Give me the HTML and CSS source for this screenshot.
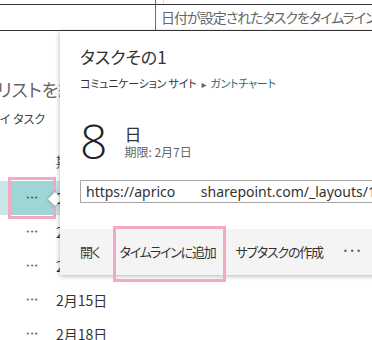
FILE: index.html
```html
<!DOCTYPE html>
<html lang="ja">
<head>
    <meta charset="UTF-8">
    <title>タスクその1</title>
    <link rel="stylesheet" href="styles.css">
</head>
<body>
<div id="page">
    <div class="grid-top">
        <div class="cell-a"></div>
        <div class="cell-b"></div>
        <div class="cell-c"></div>
    </div>
    <div class="grid-row">
        <div class="cell-a"></div>
        <div class="cell-text">日付が設定されたタスクをタイムラインに追加します</div>
    </div>

    <h2 class="list-title">リストを紹介</h2>
    <div class="view-name">マイ タスク</div>

    <ul class="list">
        <li class="list-head"><span class="dots"></span><span class="date">期限</span></li>
        <li class="selected"><span class="dots">•••</span><span class="date">2月7日</span></li>
        <li><span class="dots">•••</span><span class="date">2月9日</span></li>
        <li><span class="dots">•••</span><span class="date">2月12日</span></li>
        <li><span class="dots">•••</span><span class="date">2月15日</span></li>
        <li><span class="dots">•••</span><span class="date">2月18日</span></li>
    </ul>

    <div class="mark" id="markRow"></div>

    <div id="beak"></div>
    <div id="callout">
        <h1 class="c-title">タスクその1</h1>
        <div class="crumb">コミュニケーション サイト<span class="arrow">&#9656;</span><a href="javascript:;">ガントチャート</a></div>
        <div class="due">
            <span class="num">8</span>
            <div class="due-text">
                <div class="unit">日</div>
                <div class="limit">期限: 2月7日</div>
            </div>
        </div>
        <div class="url">https://aprico&nbsp;&nbsp;&nbsp;&nbsp;&nbsp;&nbsp;&nbsp;sharepoint.com/_layouts/15/listform.aspx</div>
        <div class="actions">
            <a href="javascript:;">開く</a>
            <a href="javascript:;">タイムラインに追加</a>
            <a href="javascript:;">サブタスクの作成</a>
            <a href="javascript:;" class="more">•••</a>
        </div>
    </div>

    <div class="mark" id="markBtn"></div>
</div>
</body>
</html>
```

FILE: styles.css
```css
* {
    margin: 0;
    padding: 0;
    list-style: none;
}

body {
    background: #fff;
    font-family: "Noto Sans CJK JP", "Noto Sans", sans-serif;
    font-feature-settings: "palt";
    color: #333;
}

a {
    color: inherit;
    text-decoration: none;
}

#page {
    width: 372px;
    height: 340px;
    overflow: hidden;
    position: relative;
}

/* table header behind the callout */
.grid-top {
    display: flex;
    height: 4px;
    border-bottom: 1px solid #333;
}

.grid-top .cell-b {
    width: 7px;
    border-right: 1px solid #ddd;
}

.grid-row {
    display: flex;
    height: 25px;
    border-bottom: 1px solid #333;
}

.cell-a {
    width: 155px;
    flex: none;
    border-right: 1px solid #3d7b86;
}

.cell-text {
    padding-left: 5px;
    font-size: 14px;
    letter-spacing: -1px;
    line-height: 25px;
    color: #666;
    white-space: nowrap;
}

.list-title {
    margin: 45px 0 0 -3px;
    font-size: 18px;
    line-height: 26px;
    font-weight: normal;
    color: #666;
    white-space: nowrap;
}

.view-name {
    margin: 8px 0 0 -11px;
    font-size: 12px;
    line-height: 18px;
    color: #444;
    white-space: nowrap;
}

.list {
    margin-top: 25px;
}

.list li {
    display: flex;
    align-items: center;
    height: 34px;
}

.list li.list-head {
    height: 16px;
    margin-bottom: 12px;
    font-size: 12px;
    color: #555;
}

.list .dots {
    width: 44px;
    margin-left: 10px;
    align-self: stretch;
    display: flex;
    align-items: center;
    justify-content: center;
    font-family: "DejaVu Sans", sans-serif;
    font-size: 7px;
    color: #666;
}

.list .date {
    margin-left: 2px;
    font-size: 14px;
}

.list li.selected {
    background: #c8e7e7;
}

.list li.selected .dots {
    background: #a0d5d5;
    color: #555;
}

/* callout */
#beak {
    position: absolute;
    left: 50px;
    top: 194px;
    width: 10px;
    height: 10px;
    background: #fff;
    transform: rotate(45deg);
    box-shadow: 0 0 4px rgba(0, 0, 0, .35);
}

#callout {
    position: absolute;
    left: 60px;
    top: 31px;
    width: 340px;
    background: #fff;
    box-shadow: 0 1px 5px rgba(0, 0, 0, .3);
    padding-top: 14px;
}

.c-title {
    margin-left: 20px;
    font-size: 17px;
    line-height: 24px;
    font-weight: normal;
    color: #333;
}

.crumb {
    margin: 6px 0 0 20px;
    font-size: 11px;
    letter-spacing: -0.2px;
    line-height: 16px;
    color: #333;
    white-space: nowrap;
}

.crumb .arrow {
    margin: 0 4px 0 5px;
    font-family: "DejaVu Sans", sans-serif;
    font-size: 10px;
    color: #666;
}

.crumb a {
    color: #1a6e78;
}

.due {
    display: flex;
    margin: 24px 0 0 20px;
}

.due .num {
    font-family: "Open Sans", sans-serif;
    font-weight: 300;
    font-size: 48px;
    line-height: 48px;
    color: #222;
}

.due-text {
    margin: 7px 0 0 17px;
}

.due .unit {
    font-size: 17px;
    line-height: 20px;
    color: #333;
}

.due .limit {
    font-size: 12px;
    line-height: 16px;
    color: #666;
}

.url {
    margin: 15px 0 0 20px;
    height: 21px;
    border: 1px solid #a6a6a6;
    padding-left: 5px;
    font-family: "Noto Sans", sans-serif;
    font-size: 14px;
    line-height: 21px;
    color: #333;
    white-space: nowrap;
    overflow: hidden;
}

.actions {
    display: flex;
    margin-top: 26px;
    height: 46px;
    padding-left: 10px;
    background: #f4f4f4;
    font-size: 13px;
    letter-spacing: -1.2px;
    line-height: 46px;
    white-space: nowrap;
}

.actions a {
    padding: 0 10px;
}

.actions .more {
    font-family: "DejaVu Sans", sans-serif;
    font-size: 8px;
    letter-spacing: 2px;
    color: #666;
}

/* pink annotation frames */
.mark {
    position: absolute;
    border: 3px solid #f3a8c6;
}

#markRow {
    left: 8px;
    top: 177px;
    width: 42px;
    height: 36px;
}

#markBtn {
    left: 113px;
    top: 226px;
    width: 107px;
    height: 50px;
}
```
